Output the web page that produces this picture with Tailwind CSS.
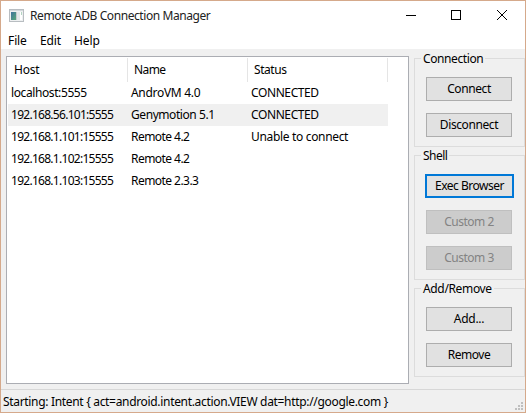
<!DOCTYPE html>
<html lang="en">
<head>
<meta charset="utf-8">
<title>Remote ADB Connection Manager</title>
<script src="https://cdn.jsdelivr.net/npm/@tailwindcss/browser@4"></script>
</head>
<body class="w-[526px] h-[413px] overflow-hidden font-['Noto_Sans','Open_Sans',sans-serif] text-[12px] leading-[16px] text-black whitespace-nowrap">
<div class="w-[526px] h-[413px] border border-[#d5a98b] bg-[#f0f0f0] flex flex-col">
  <header class="h-[29px] bg-white flex items-center shrink-0">
    <svg class="ml-2 w-[15px] h-[13px]" viewBox="0 0 15 13" shape-rendering="crispEdges">
      <defs><linearGradient id="g" x2="1" y2="1"><stop stop-color="#3f729d"/><stop offset="1" stop-color="#58a878"/></linearGradient></defs>
      <path fill="#b8bdc1" d="M0 0h15v13H0z"/><path fill="#eef0f1" d="M1 2h13v10H1z"/><path fill="#d2d7da" d="M1 1h13v1H1z"/>
      <path fill="url(#g)" d="M2 3h5v8H2z"/><path fill="#c5cbce" d="M7 3h1v8H7z"/><path fill="#e3e7e8" d="M8 3h3v8H8z"/><path fill="#fff" d="M11 3h2v8h-2z"/><path fill="#b4d5c2" d="M12 3h1v3h-1z"/>
    </svg>
    <h1 class="ml-[6px] w-[200px] text-[#222] tracking-[-0.42px]">Remote ADB Connection Manager</h1>
    <svg class="ml-auto mr-[16px] w-[104px] h-[13px]" viewBox="0 0 104 13" fill="none" stroke="#000">
      <path d="M1 6.500h10M46.500 1.500h9v9h-9z" shape-rendering="crispEdges"/><path d="M92 1l10 10M102 1L92 11"/>
    </svg>
  </header>
  <nav class="h-[19px] bg-white flex items-center pl-[7px] pt-[2px] gap-[14px] shrink-0 tracking-[-0.1px]">
    <span class="w-[18px]">File</span><span class="w-[20px]">Edit</span><span>Help</span>
  </nav>
  <main class="flex h-[340px] shrink-0">
    <section class="ml-[5px] mt-[7px] w-[403px] h-[328px] border border-[#abadb3] bg-white p-px shrink-0">
      <div class="flex h-6 items-center">
        <div class="w-[120px] h-6 border-r border-[#e5e5e5] pl-[6px] pt-[4px] tracking-[-0.25px]">Host</div>
        <div class="w-[120px] h-6 border-r border-[#e5e5e5] pl-[6px] pt-[4px] tracking-[-0.6px]">Name</div>
        <div class="w-[140px] h-6 border-r border-[#e5e5e5] pl-[6px] pt-[4px] tracking-[-0.45px]">Status</div>
      </div>
      <div class="grid grid-cols-[120px_120px_137px] w-[380px] h-[22px] items-center pl-[3px]"><span class="tracking-[-0.4px]">localhost:5555</span><span class="tracking-[-0.3px]">AndroVM 4.0</span><span class="tracking-[-0.4px]">CONNECTED</span></div>
      <div class="grid grid-cols-[120px_120px_137px] w-[380px] h-[22px] items-center pl-[3px] bg-[#f0f0f0]"><span class="tracking-[-0.72px]">192.168.56.101:5555</span><span class="tracking-[-0.43px]">Genymotion 5.1</span><span class="tracking-[-0.4px]">CONNECTED</span></div>
      <div class="grid grid-cols-[120px_120px_137px] w-[380px] h-[22px] items-center pl-[3px]"><span class="tracking-[-0.72px]">192.168.1.101:15555</span><span class="tracking-[-0.55px]">Remote 4.2</span><span class="tracking-[-0.33px]">Unable to connect</span></div>
      <div class="grid grid-cols-[120px_120px_137px] w-[380px] h-[22px] items-center pl-[3px]"><span class="tracking-[-0.72px]">192.168.1.102:15555</span><span class="tracking-[-0.55px]">Remote 4.2</span></div>
      <div class="grid grid-cols-[120px_120px_137px] w-[380px] h-[22px] items-center pl-[3px]"><span class="tracking-[-0.72px]">192.168.1.103:15555</span><span class="tracking-[-0.55px]">Remote 2.3.3</span></div>
    </section>
    <aside class="ml-[5px] mt-[9px] w-[111px] flex flex-col gap-2 shrink-0">
      <section class="h-[89px] border border-[#dcdcdc] relative flex flex-col gap-3 pl-[11px] pt-[18px]">
        <h2 class="absolute -top-[8px] left-[6px] px-[2px] bg-[#f0f0f0] tracking-[-0.4px]">Connection</h2>
        <button class="w-[86px] h-6 border border-[#adadad] bg-[#e1e1e1] tracking-[-0.4px]">Connect</button>
        <button class="w-[86px] h-6 border border-[#adadad] bg-[#e1e1e1] tracking-[-0.4px]">Disconnect</button>
      </section>
      <section class="h-[125px] border border-[#dcdcdc] relative flex flex-col gap-3 pl-[11px] pt-[18px]">
        <h2 class="absolute -top-[8px] left-[6px] px-[2px] bg-[#f0f0f0] tracking-[-0.5px]">Shell</h2>
        <button class="-ml-px w-[89px] h-6 border-2 border-[#0078d7] bg-[#e1e1e1] tracking-[-0.5px]">Exec Browser</button>
        <button class="w-[86px] h-6 border border-[#bfbfbf] bg-[#cccccc] text-[#838383] tracking-[-0.5px]">Custom 2</button>
        <button class="w-[86px] h-6 border border-[#bfbfbf] bg-[#cccccc] text-[#838383] tracking-[-0.5px]">Custom 3</button>
      </section>
      <section class="h-[89px] border border-[#dcdcdc] relative flex flex-col gap-3 pl-[11px] pt-[18px]">
        <h2 class="absolute -top-[8px] left-[6px] px-[2px] bg-[#f0f0f0] tracking-[-0.35px]">Add/Remove</h2>
        <button class="w-[86px] h-6 border border-[#adadad] bg-[#e1e1e1] tracking-[-0.3px]">Add...</button>
        <button class="w-[86px] h-6 border border-[#adadad] bg-[#e1e1e1] tracking-[-0.5px]">Remove</button>
      </section>
    </aside>
  </main>
  <footer class="flex-1 border-t border-[#d7d7d7] flex items-center pl-[2px]">
    <span class="pt-px tracking-[-0.32px]">Starting: Intent { act=android.intent.action.VIEW dat=http://google.com }</span>
    <svg class="ml-auto mr-[2px] mt-[10px] w-2 h-2" viewBox="0 0 8 8" fill="#bfbfbf" shape-rendering="crispEdges"><path d="M6 0h2v2H6zM3 3h2v2H3zM6 3h2v2H6zM0 6h2v2H0zM3 6h2v2H3zM6 6h2v2H6z"/></svg>
  </footer>
</div>
</body>
</html>
